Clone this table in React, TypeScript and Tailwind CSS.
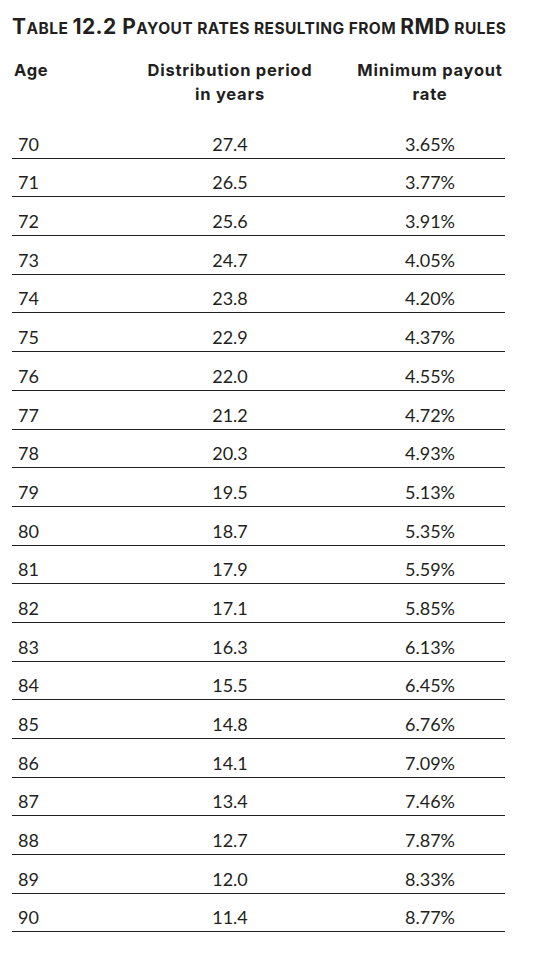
import React from "react";

const rows: [string, string, string][] = [
  ["70", "27.4", "3.65%"],
  ["71", "26.5", "3.77%"],
  ["72", "25.6", "3.91%"],
  ["73", "24.7", "4.05%"],
  ["74", "23.8", "4.20%"],
  ["75", "22.9", "4.37%"],
  ["76", "22.0", "4.55%"],
  ["77", "21.2", "4.72%"],
  ["78", "20.3", "4.93%"],
  ["79", "19.5", "5.13%"],
  ["80", "18.7", "5.35%"],
  ["81", "17.9", "5.59%"],
  ["82", "17.1", "5.85%"],
  ["83", "16.3", "6.13%"],
  ["84", "15.5", "6.45%"],
  ["85", "14.8", "6.76%"],
  ["86", "14.1", "7.09%"],
  ["87", "13.4", "7.46%"],
  ["88", "12.7", "7.87%"],
  ["89", "12.0", "8.33%"],
  ["90", "11.4", "8.77%"],
];

const Big = ({ children }: { children: React.ReactNode }) => (
  <span className="text-[21px]">{children}</span>
);
const Sm = ({ children }: { children: React.ReactNode }) => (
  <span className="text-[15.5px]">{children}</span>
);

export default function App() {
  return (
    <div className="w-[543px] h-[954px] bg-white px-3 pt-[13px] text-[#231f20] font-['Lato','Noto_Sans',sans-serif]">
      <h1 className="font-['Inter',sans-serif] font-bold leading-[28px] whitespace-nowrap tracking-[0.45px]">
        <Big>T</Big>
        <Sm>ABLE </Sm>
        <Big>12.2 P</Big>
        <Sm>AYOUT RATES RESULTING FROM </Sm>
        <Big>RMD</Big>
        <Sm> RULES</Sm>
      </h1>
      <div className="mt-[15px] grid grid-cols-[93px_250px_150px] font-['Inter',sans-serif] text-[16.5px] font-bold leading-[24px] tracking-[0.75px]">
        <div className="pl-[2px]">Age</div>
        <div className="text-center">
          Distribution period
          <br />
          in years
        </div>
        <div className="text-center">
          Minimum payout
          <br />
          rate
        </div>
      </div>
      <div className="mt-[14px] w-[493px]">
        {rows.map((r) => (
          <div
            key={r[0]}
            className="grid grid-cols-[93px_250px_150px] h-[38.7px] items-end border-b border-[#231f20] pb-[2px] text-[18px] leading-[24px]"
          >
            <div className="pl-[6px]">{r[0]}</div>
            <div className="text-center">{r[1]}</div>
            <div className="text-center">{r[2]}</div>
          </div>
        ))}
      </div>
    </div>
  );
}
